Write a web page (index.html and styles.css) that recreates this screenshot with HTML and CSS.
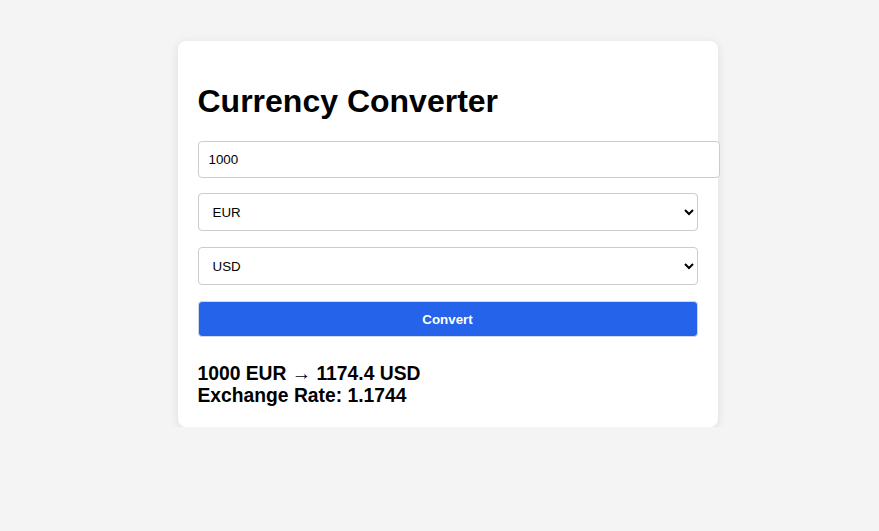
FILE: index.html
```html
<!DOCTYPE html>
<html>
<head>
<meta charset="utf-8">
<title>Currency Converter</title>
<link rel="stylesheet" href="styles.css">
</head>
<body>
<div class="card">
  <h1 class="title">Currency Converter</h1>
  <input class="amount" type="number" value="1000">
  <select class="currency">
    <option selected>EUR</option>
    <option>USD</option>
  </select>
  <select class="currency">
    <option>EUR</option>
    <option selected>USD</option>
  </select>
  <button class="convert">Convert</button>
  <div class="result">
    <div>1000 EUR → 1174.4 USD</div>
    <div>Exchange Rate: 1.1744</div>
  </div>
</div>
</body>
</html>
```
FILE: styles.css
```css
html, body {
  margin: 0;
  padding: 0;
}
body {
  background: #f4f4f4;
  font-family: "Liberation Sans", Arial, sans-serif;
  padding-top: 41px;
}
.card {
  width: 500px;
  margin: 0 auto;
  background: #fff;
  padding: 20px;
  border-radius: 8px;
  box-shadow: 0 2px 10px rgba(0, 0, 0, 0.1);
  position: relative;
  left: 8px;
}
.title {
  font-size: 32px;
  margin: 22px 0 21px;
}
.amount, .currency, .convert {
  display: block;
  font-family: "Liberation Sans", Arial, sans-serif;
  font-size: 13.33px;
  margin: 0 0 15px 0;
}
.amount {
  width: 100%;
  padding: 10px;
  border: 1px solid #ccc;
  border-radius: 4px;
  color: #000;
  box-sizing: content-box;
}
.currency {
  width: 100%;
  height: 38px;
  padding: 0 10px;
  border: 1px solid #ccc;
  border-radius: 4px;
  background: #fff;
  color: #000;
  margin-bottom: 16px;
}
.convert {
  width: 100%;
  height: 36px;
  background: #2563eb;
  color: #fff;
  font-weight: bold;
  border: 1px solid #d0d8e8;
  border-radius: 4px;
  margin-bottom: 0;
}
.result {
  margin-top: 26px;
  font-size: 19.3px;
  font-weight: bold;
  line-height: 22px;
}
```
